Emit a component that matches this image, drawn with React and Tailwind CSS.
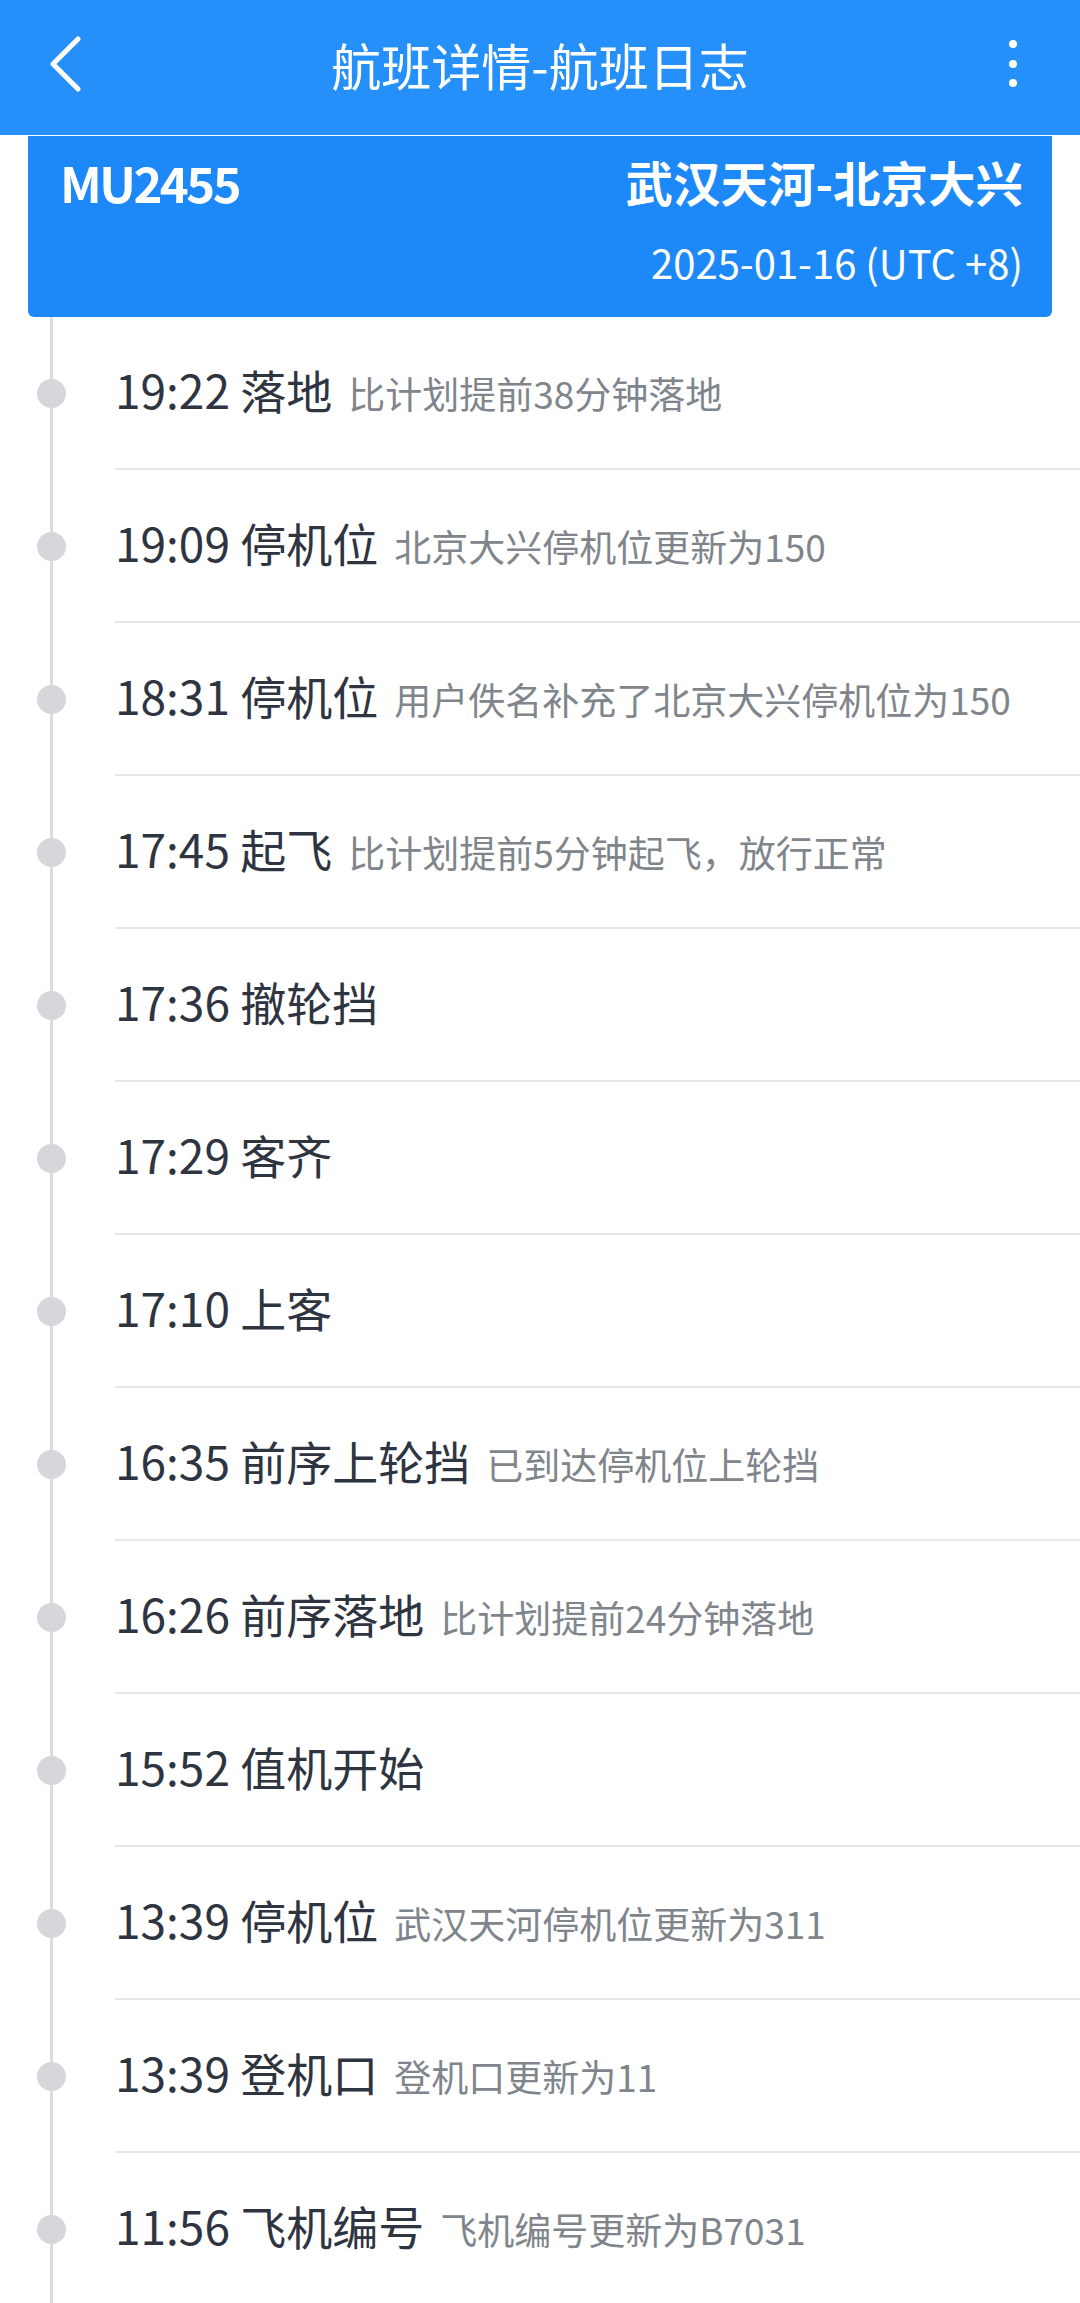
import React from 'react';

const FONT = { fontFamily: '"Noto Sans CJK SC", "Noto Sans", sans-serif' };

const logs = [
  { time: '19:22', title: '落地', note: '比计划提前38分钟落地' },
  { time: '19:09', title: '停机位', note: '北京大兴停机位更新为150' },
  { time: '18:31', title: '停机位', note: '用户佚名补充了北京大兴停机位为150' },
  { time: '17:45', title: '起飞', note: '比计划提前5分钟起飞，放行正常' },
  { time: '17:36', title: '撤轮挡', note: '' },
  { time: '17:29', title: '客齐', note: '' },
  { time: '17:10', title: '上客', note: '' },
  { time: '16:35', title: '前序上轮挡', note: '已到达停机位上轮挡' },
  { time: '16:26', title: '前序落地', note: '比计划提前24分钟落地' },
  { time: '15:52', title: '值机开始', note: '' },
  { time: '13:39', title: '停机位', note: '武汉天河停机位更新为311' },
  { time: '13:39', title: '登机口', note: '登机口更新为11' },
  { time: '11:56', title: '飞机编号', note: '飞机编号更新为B7031' },
];

const Header = () => (
  <div className="h-[135px] bg-[#2690fa] grid grid-cols-[135px_1fr_135px] items-center">
    <div className="pl-[50px] pb-[6px]">
      <svg width="32" height="57" viewBox="0 0 32 57" fill="none">
        <path d="M28 3 L3 28 L28 53" stroke="white" strokeWidth="5" strokeLinecap="round" strokeLinejoin="round" />
      </svg>
    </div>
    <div className="text-center text-white text-[50px] leading-none pb-[8px]">航班详情-航班日志</div>
    <div className="flex flex-col items-center gap-[11.5px] pb-[8px]">
      <span className="w-[8px] h-[8px] rounded-full bg-white" />
      <span className="w-[8px] h-[8px] rounded-full bg-white" />
      <span className="w-[8px] h-[8px] rounded-full bg-white" />
    </div>
  </div>
);

const FlightCard = () => (
  <div className="mx-[28px] mt-[1px] h-[181px] bg-[#1d89f8] rounded-b-[6px] text-white pl-[32px] pr-[29px] pt-[16px]">
    <div className="h-[60px] flex items-center justify-between font-bold">
      <span className="text-[49px] tracking-[-2.5px]">MU2455</span>
      <span className="text-[47.5px]">武汉天河-北京大兴</span>
    </div>
    <div className="mt-[25px] h-[50px] flex items-center justify-end text-[40px]">
      2025-01-16 (UTC +8)
    </div>
  </div>
);

const LogRow = ({ time, title, note }) => (
  <div className="flex">
    <div className="w-[115px] shrink-0 pl-[37px] flex">
      <div className="w-[29px] flex flex-col items-center">
        <div className="w-[3px] flex-1 bg-[#dcdcdf]" />
        <div className="w-[29px] h-[29px] rounded-full bg-[#d6d7db] shrink-0" />
        <div className="w-[3px] flex-1 bg-[#dcdcdf]" />
      </div>
    </div>
    <div className="flex-1 flex flex-col">
      <div className="h-[151px] pb-[6px] flex items-center">
        <div className="flex items-baseline">
          <span className="text-[46px] text-[#2e3440]">{time} {title}</span>
          {note && <span className="ml-[16px] text-[37px] text-[#80858c]">{note}</span>}
        </div>
      </div>
      <div className="h-[2px] bg-[#e6e6e8]" />
    </div>
  </div>
);

export default function App() {
  return (
    <div className="w-[1080px] h-[2303px] overflow-hidden bg-white" style={FONT}>
      <Header />
      <FlightCard />
      <div className="flex flex-col">
        {logs.map((l, i) => (
          <LogRow key={i} {...l} />
        ))}
      </div>
    </div>
  );
}
